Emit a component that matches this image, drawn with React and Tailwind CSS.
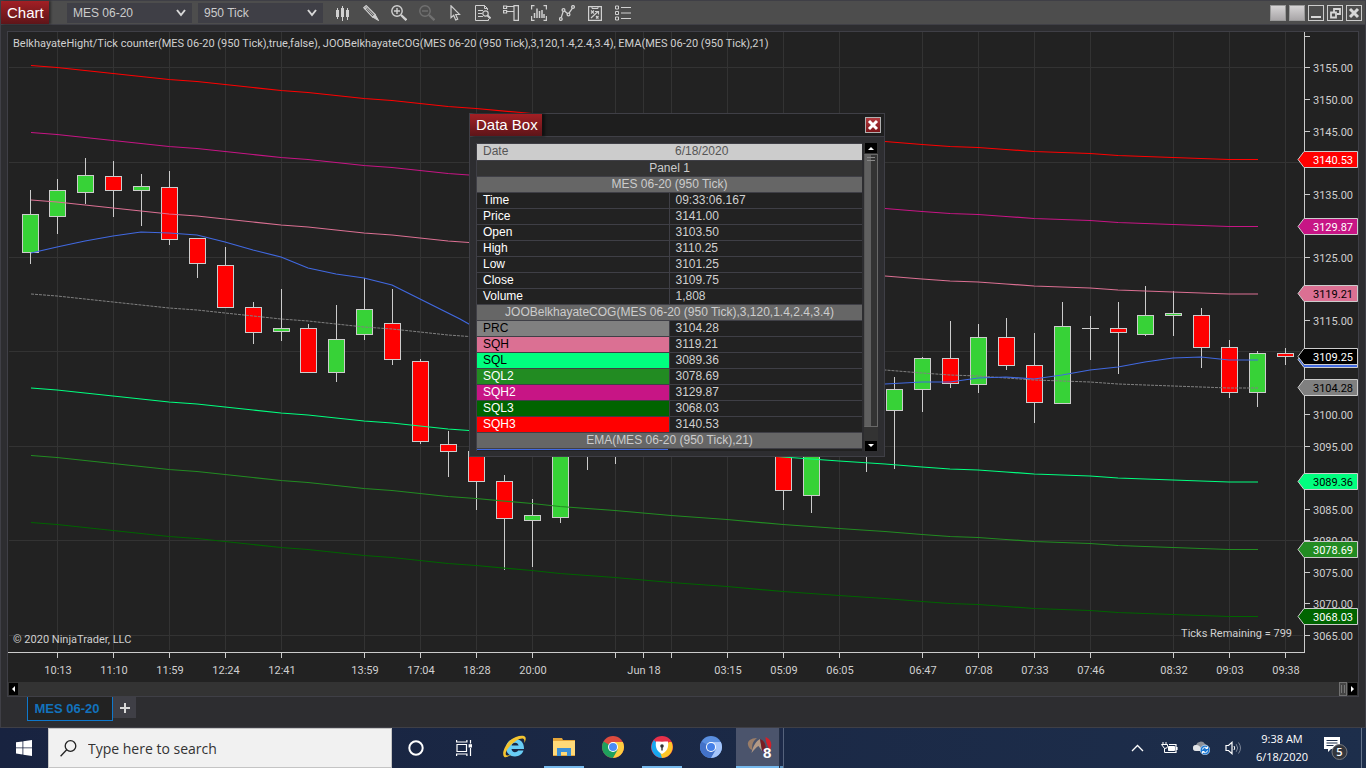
import React from "react";

const GREEN = "#37d237";
const RED = "#ff0000";
const LINE = "#cccccc";

/* center x, body top, body bottom, high, low, colour */
const candles = [
  [30, 214, 252, 190, 264, GREEN],
  [57, 190, 216, 179, 234, GREEN],
  [85, 175, 192, 158, 204, GREEN],
  [113, 176, 190, 161, 217, RED],
  [141, 186, 190, 174, 226, GREEN],
  [169, 187, 239, 171, 245, RED],
  [197, 238, 263, 238, 278, RED],
  [225, 265, 307, 247, 307, RED],
  [253, 307, 332, 302, 344, RED],
  [281, 328, 331, 289, 341, GREEN],
  [308, 328, 372, 324, 372, RED],
  [336, 339, 372, 305, 382, GREEN],
  [364, 309, 334, 278, 340, GREEN],
  [392, 323, 359, 289, 365, RED],
  [420, 361, 441, 359, 444, RED],
  [448, 444, 451, 431, 477, RED],
  [476, 451, 481, 451, 510, RED],
  [504, 481, 518, 475, 570, RED],
  [532, 515, 520, 499, 567, GREEN],
  [560, 440, 517, 430, 523, GREEN],
  [587, 425, 440, 420, 470, RED],
  [615, 425, 440, 420, 464, GREEN],
  [783, 430, 490, 420, 510, RED],
  [811, 430, 495, 420, 513, GREEN],
  [866, 400, 420, 395, 472, GREEN],
  [894, 389, 410, 377, 469, GREEN],
  [922, 358, 389, 357, 412, GREEN],
  [950, 358, 383, 321, 388, RED],
  [978, 337, 384, 324, 393, GREEN],
  [1006, 337, 365, 318, 370, RED],
  [1034, 365, 402, 333, 423, RED],
  [1062, 326, 403, 302, 403, GREEN],
  [1090, 328, 328, 316, 360, GREEN],
  [1118, 328, 332, 302, 374, RED],
  [1145, 315, 334, 286, 336, GREEN],
  [1173, 313, 315, 291, 336, GREEN],
  [1201, 315, 347, 308, 368, RED],
  [1229, 347, 392, 340, 398, RED],
  [1257, 353, 392, 351, 407, GREEN],
  [1285, 353, 356, 348, 365, RED],
];

const regression = [
  [31, 294], [57, 296], [85, 299], [113, 302], [141, 305], [169, 308], [197, 310], [225, 313],
  [253, 316], [281, 319], [308, 321], [336, 324], [364, 327], [392, 329], [420, 332], [448, 335],
  [476, 337], [532, 342], [560, 345], [615, 349], [671, 354], [727, 358], [783, 363], [839, 367],
  [885, 370], [922, 373], [950, 375], [978, 376], [1006, 378], [1034, 380], [1062, 381], [1090, 382],
  [1118, 384], [1145, 385], [1173, 386], [1201, 387], [1229, 388], [1258, 388],
];

const bands = [
  [-228.5, "#ff0000"],
  [-161.5, "#c71585"],
  [-94, "#db7093"],
  [94, "#00ff7f"],
  [161.5, "#228b22"],
  [228.5, "#006400"],
];

const ema = [
  [31, 253], [57, 247], [85, 241], [113, 236], [141, 232], [169, 233], [197, 235], [225, 242],
  [253, 250], [281, 257], [308, 268], [336, 274], [364, 278], [392, 285], [420, 299], [460, 319],
  [476, 328], [560, 365], [671, 392], [783, 402], [839, 390], [885, 384], [922, 382], [950, 382], [978, 378],
  [1006, 377], [1034, 379], [1062, 375], [1090, 370], [1118, 367], [1145, 362], [1173, 358],
  [1201, 357], [1229, 360], [1258, 360],
];

const times = [
  [57, "10:13"], [113, "11:10"], [169, "11:59"], [225, "12:24"], [281, "12:41"], [364, "13:59"],
  [420, "17:04"], [476, "18:28"], [532, "20:00"], [615, ""], [643, "Jun 18"], [671, ""],
  [727, "03:15"], [783, "05:09"], [839, "06:05"], [922, "06:47"], [978, "07:08"], [1034, "07:33"],
  [1090, "07:46"], [1173, "08:32"], [1229, "09:03"], [1285, "09:38"],
];

const gridRows = [67, 162, 257, 351, 446, 540, 635];

const prices = [
  [67, "3155.00"], [99, "3150.00"], [131, "3145.00"], [194, "3135.00"], [257, "3125.00"],
  [320, "3115.00"], [414, "3100.00"], [446, "3095.00"], [509, "3085.00"], [540, "3080.00"],
  [572, "3075.00"], [603, "3070.00"], [635, "3065.00"],
];

const tags = [
  [159, "3140.53", "#ff0000", "#ffffff"],
  [226, "3129.87", "#c71585", "#ffffff"],
  [293, "3119.21", "#db7093", "#000000"],
  [359, "", "#4169e1", "#ffffff"],
  [356, "3109.25", "#000000", "#ffffff"],
  [387, "3104.28", "#808080", "#000000"],
  [481, "3089.36", "#00ff7f", "#000000"],
  [549, "3078.69", "#228b22", "#ffffff"],
  [616, "3068.03", "#006400", "#ffffff"],
];

const toPoints = (pts, dy = 0) => pts.map(([x, y]) => `${x},${y + dy}`).join(" ");

function PriceChart() {
  return (
    <svg
      viewBox="8 32 1350 650"
      className="block h-auto w-full bg-[#222222] font-[Roboto,'Liberation_Sans',sans-serif] text-[11px]"
      role="img"
      aria-label="MES 06-20 950 tick candlestick chart"
    >
      <g stroke="#333333" shapeRendering="crispEdges">
        {times.map(([x]) => (
          <line key={x} x1={x + 0.5} x2={x + 0.5} y1="32" y2="650" />
        ))}
        {gridRows.map((y) => (
          <line key={y} x1="9" x2="1303" y1={y + 0.5} y2={y + 0.5} />
        ))}
      </g>
      <g shapeRendering="crispEdges" stroke={LINE}>
        {candles.map(([x, top, bottom, high, low, fill]) => (
          <g key={x}>
            <line x1={x + 0.5} x2={x + 0.5} y1={high} y2={low} />
            {top === bottom ? (
              <line x1={x - 8} x2={x + 9} y1={top + 0.5} y2={top + 0.5} />
            ) : (
              <rect x={x - 7.5} y={top + 0.5} width="16" height={bottom - top} fill={fill} />
            )}
          </g>
        ))}
      </g>
      <g fill="none">
        {bands.map(([dy, color]) => (
          <polyline key={dy} points={toPoints(regression, dy)} stroke={color} strokeWidth="1.2" />
        ))}
        <polyline points={toPoints(regression)} stroke="#808080" strokeDasharray="3 1" />
        <polyline points={toPoints(ema)} stroke="#4169e1" strokeWidth="1.2" />
      </g>
      <g stroke={LINE} shapeRendering="crispEdges">
        <line x1="8" x2="1305" y1="652.5" y2="652.5" />
        <line x1="1304.5" x2="1304.5" y1="32" y2="653" />
        <line x1="1305" x2="1310" y1="36.5" y2="36.5" />
        {times.map(([x]) => (
          <line key={x} x1={x + 0.5} x2={x + 0.5} y1="653" y2="658" />
        ))}
        {prices.map(([y]) => (
          <line key={y} x1="1305" x2="1310" y1={y + 0.5} y2={y + 0.5} />
        ))}
      </g>
      <g fill="#d0d0d0">
        {times.map(([x, label]) => (
          <text key={x} x={x + 1} y="674" textAnchor="middle">{label}</text>
        ))}
        {prices.map(([y, label]) => (
          <text key={y} x="1313" y={y + 5}>{label}</text>
        ))}
        <text x="13" y="47">
          BelkhayateHight/Tick counter(MES 06-20 (950 Tick),true,false), JOOBelkhayateCOG(MES 06-20 (950 Tick),3,120,1.4,2.4,3.4), EMA(MES 06-20 (950 Tick),21)
        </text>
        <text x="13" y="643">© 2020 NinjaTrader, LLC</text>
        <text x="1292" y="637" textAnchor="end">Ticks Remaining = 799</text>
      </g>
      {tags.map(([y, label, fill, color]) => (
        <g key={y}>
          <polygon
            points={`1298,${y + 0.5} 1304,${y - 7.5} 1357.5,${y - 7.5} 1357.5,${y + 8.5} 1304,${y + 8.5}`}
            fill={fill}
            stroke={LINE}
          />
          <text x="1313" y={y + 5} fill={color}>{label}</text>
        </g>
      ))}
    </svg>
  );
}

const stroke = { fill: "none", stroke: "currentColor" };

const tools = [
  ["Chart style", (
    <g fill="currentColor">
      <path d="M1 5h3v7H1zM2 3h1v11H2zM6 3h3v9H6zM7 1h1v15H7zM11 5h3v7h-3zM12 3h1v12h-1z" />
    </g>
  )],
  ["Drawing tools", (
    <g {...stroke}>
      <path d="M.8 2.7 3.2.6l9 9-2.5 2.5z" strokeWidth="1.2" />
      <path d="M2 1.6 11 10.8M1.8 4.2 4.4 2" />
      <path d="M12.2 9.6 15.6 15.6 9.7 12.1z" fill="currentColor" />
    </g>
  )],
  ["Zoom in", (
    <g {...stroke}>
      <circle cx="6" cy="6" r="5.2" strokeWidth="1.4" />
      <path d="M3 6h6M6 3v6" strokeWidth="1.4" />
      <path d="m10 10 5.4 5.2" strokeWidth="2.4" />
    </g>
  )],
  ["Zoom out", (
    <g fill="none" stroke="#707070">
      <circle cx="6" cy="6" r="5.2" strokeWidth="1.4" />
      <path d="M3 6h6" strokeWidth="1.4" />
      <path d="m10 10 5.4 5.2" strokeWidth="2.4" />
    </g>
  )],
  ["Cursor", (
    <path {...stroke} strokeWidth="1.2" d="M4 .8v11.8l2.7-2.4 2 4.8 2-.9-2-4.6 3.8-.1z" />
  )],
  ["Data box", (
    <g {...stroke}>
      <path d="M12.5 5V3.500L9.500.5H.5v15H13.500V14" />
      <path d="M9.500.5v3h3M3 5.500h5M3 8.500h4M3 11.500h5" />
      <circle cx="10.500" cy="8.500" r="2.700" strokeWidth="1.200" />
      <path d="m12.500 10.500 3 3" strokeWidth="2" />
    </g>
  )],
  ["Chart trader", (
    <g {...stroke}>
      <path d="M11 .6h4.400v14.800H11zM.6 1h3v2.500h-3zM.6 5.500h3V8h-3z" strokeWidth="1.200" />
      <path d="M3.600 1.500H11M3.600 6.500H11" />
    </g>
  )],
  ["Indicators", (
    <g {...stroke}>
      <path d="M3.500.6H.6v4M.6 11v4.400h2.900M12.500.6h2.900v4M15.400 11v4.400h-2.900" strokeWidth="1.200" />
      <path d="M3.500 13V8M6 13V3.500M8.500 13V6M11 13V5M13 13V9" strokeWidth="1.500" />
    </g>
  )],
  ["Strategies", (
    <g {...stroke} strokeWidth="1.300">
      <circle cx="1.800" cy="14" r="1.400" />
      <circle cx="4.500" cy="5" r="1.400" />
      <circle cx="9.500" cy="9.500" r="1.400" />
      <circle cx="14" cy="2" r="1.400" />
      <path d="m2.200 12.600 2-6.200M5.500 6l3 2.500M10 8.200l3.500-5" />
    </g>
  )],
  ["Strategy analyzer", (
    <g {...stroke}>
      <path d="M1.600 1.600h12.800v13.800H1.600z" strokeWidth="1.200" />
      <path d="M5 1.500h6v2H5z" />
      <path d="m4 5.500 3 3m0-3-3 3M4 13l7-6.500M8 6.500h3.500v3M9 11l2.500 2.500m0-2.500L9 13.500" strokeWidth="1.200" />
    </g>
  )],
  ["Properties", (
    <g {...stroke}>
      <path d="M.5 1h3v3h-3zM.5 6.500h3v3h-3zM.5 12h3v3h-3z" />
      <path d="M6 2.500h10M6 8h10M6 13.500h10" strokeWidth="1.200" />
    </g>
  )],
];

function Picker({ label, value }) {
  return (
    <label className="relative block w-[125px]">
      <span className="sr-only">{label}</span>
      <select className="block h-5 w-full appearance-none bg-[#3f3f46] pr-6 pl-1.5 text-xs leading-5 text-[#cccccc] outline-none">
        <option>{value}</option>
      </select>
      <svg viewBox="0 0 10 8" className="pointer-events-none absolute top-1.5 right-1.5 h-2 w-2.5">
        <path d="m1 1 4 5 4-5" fill="none" stroke="#d8d8d8" strokeWidth="2" />
      </svg>
    </label>
  );
}

const boxButton = "flex size-4 items-center justify-center border border-[#cccccc] text-[#d8d8d8]";

function TitleBar() {
  return (
    <header className="flex h-[25px] items-start border-y border-[#3f3f46] bg-[#4d4d4d]">
      <h1 className="h-[23px] w-12 bg-linear-to-b from-[#a31f24] to-[#5e1519] pl-1.5 text-[15px] leading-[23px] text-white shadow-[2px_0_2px_rgba(0,0,0,0.4)]">
        Chart
      </h1>
      <div className="ml-[18px] flex gap-1.5 pt-0.5">
        <Picker label="Instrument" value="MES 06-20" />
        <Picker label="Interval" value="950 Tick" />
      </div>
      <nav className="ml-1.5 flex pt-1 text-[#d0d0d0]" aria-label="Chart tools">
        {tools.map(([name, icon]) => (
          <button key={name} type="button" aria-label={name} className="flex w-7 justify-center">
            <svg viewBox="0 0 16 16" className="size-4">{icon}</svg>
          </button>
        ))}
      </nav>
      <div className="ml-auto flex gap-[3px] pt-1 pr-[3px]">
        <button type="button" aria-label="Instrument link" className="size-4 border border-[#999999] bg-linear-to-b from-[#d5d3d4] to-[#a9a6a8]" />
        <button type="button" aria-label="Interval link" className="size-4 border border-[#999999] bg-linear-to-b from-[#d5d3d4] to-[#a9a6a8]" />
        <button type="button" aria-label="Minimize" className={boxButton}>
          <svg viewBox="0 0 14 14" className="size-3.5 shrink-0"><path d="M2 10h10v2H2z" fill="currentColor" /></svg>
        </button>
        <button type="button" aria-label="Restore" className={boxButton}>
          <svg viewBox="0 0 14 14" className="size-3.5 shrink-0">
            <path d="M6 6V3h6v5H9M3 6.500h5v5H3z" fill="none" stroke="currentColor" strokeWidth="1.800" />
          </svg>
        </button>
        <button type="button" aria-label="Close" className={boxButton}>
          <svg viewBox="0 0 14 14" className="size-3.5 shrink-0">
            <path d="m3 3 8 8m0-8-8 8" stroke="currentColor" strokeWidth="3" />
          </svg>
        </button>
      </div>
    </header>
  );
}

const quoteRows = [
  ["Time", "09:33:06.167"],
  ["Price", "3141.00"],
  ["Open", "3103.50"],
  ["High", "3110.25"],
  ["Low", "3101.25"],
  ["Close", "3109.75"],
  ["Volume", "1,808"],
];

const bandRows = [
  ["PRC", "3104.28", "bg-[#808080] text-black"],
  ["SQH", "3119.21", "bg-[#db7093] text-black"],
  ["SQL", "3089.36", "bg-[#00ff7f] text-black"],
  ["SQL2", "3078.69", "bg-[#228b22] text-white"],
  ["SQH2", "3129.87", "bg-[#c71585] text-white"],
  ["SQL3", "3068.03", "bg-[#006400] text-white"],
  ["SQH3", "3140.53", "bg-[#ff0000] text-white"],
];

function DataRow({ name, value, tone }) {
  return (
    <tr className="h-4 border-b border-[#3f3f46]">
      <th scope="row" className={`border-r border-[#3f3f46] pl-1.5 text-left font-normal ${tone}`}>{name}</th>
      <td className="bg-[#222222] pl-1.5 text-[#d0d0d0]">{value}</td>
    </tr>
  );
}

function SectionRow({ children, tone = "bg-[#666666]" }) {
  return (
    <tr className="h-4 border-b border-[#3f3f46]">
      <th colSpan={2} className={`text-center font-normal text-[#cccccc] ${tone}`}>{children}</th>
    </tr>
  );
}

function DataBox() {
  return (
    <section
      aria-label="Data Box"
      className="absolute top-[81px] left-[461px] w-[416px] border border-[#3f3f46] bg-[#2d2d30]"
    >
      <div className="flex h-[23px] items-start border-b border-[#3f3f46] bg-[#1e1e1e]">
        <h2 className="h-[22px] w-[72px] bg-linear-to-b from-[#a31f24] to-[#5e1519] pl-1.5 text-[15px] leading-[22px] text-white shadow-[3px_0_2px_#111111]">
          Data Box
        </h2>
        <button type="button" aria-label="Close data box" className="mt-[3px] mr-[3px] ml-auto flex size-4 items-center justify-center border border-[#b0b0b0] bg-linear-to-b from-[#b23a3e] to-[#7c1418]">
          <svg viewBox="0 0 12 12" className="size-3"><path d="m2 2 8 8m0-8-8 8" stroke="white" strokeWidth="3" /></svg>
        </button>
      </div>
      <div className="flex gap-0.5 px-1.5 pt-1.5 pb-[5px]">
        <div className="w-[386px] border-t border-l border-[#3f3f46]">
          <table className="w-full table-fixed border-collapse text-xs leading-[15px]">
            <colgroup>
              <col className="w-[192px]" />
              <col />
            </colgroup>
            <tbody>
              <tr className="h-4 border-b border-[#3f3f46] bg-[#cccccc] text-[#555555]">
                <th scope="row" className="pl-1.5 text-left font-normal">Date</th>
                <td className="pl-1.5">6/18/2020</td>
              </tr>
              <SectionRow tone="bg-[#333333]">Panel 1</SectionRow>
              <SectionRow>MES 06-20 (950 Tick)</SectionRow>
              {quoteRows.map(([name, value]) => (
                <DataRow key={name} name={name} value={value} tone="bg-[#222222] text-white" />
              ))}
              <SectionRow>JOOBelkhayateCOG(MES 06-20 (950 Tick),3,120,1.4,2.4,3.4)</SectionRow>
              {bandRows.map(([name, value, tone]) => (
                <DataRow key={name} name={name} value={value} tone={tone} />
              ))}
              <SectionRow>EMA(MES 06-20 (950 Tick),21)</SectionRow>
            </tbody>
          </table>
          <div className="h-0.5 bg-[#222222]">
            <div className="h-px w-[191px] bg-[#4169e1]" />
          </div>
        </div>
        <div className="flex w-3.5 flex-col items-center bg-[#333333]">
          <button type="button" aria-label="Scroll up" className="mb-px flex h-[10px] w-3 items-center justify-center bg-black">
            <svg viewBox="0 0 6 3" className="h-[3px] w-1.5"><path d="m0 3 3-3 3 3z" fill="white" /></svg>
          </button>
          <div className="w-full flex-1 border border-[#686868] border-l-[#555555] bg-linear-to-r from-[#606060] from-50% to-[#333333] to-50% px-0.5 pt-0.5">
            <div className="h-1 border-y border-[#888888]" />
          </div>
          <button type="button" aria-label="Scroll down" className="mt-3.5 flex h-[10px] w-3 items-center justify-center bg-black">
            <svg viewBox="0 0 6 3" className="h-[3px] w-1.5"><path d="m0 0 3 3 3-3z" fill="white" /></svg>
          </button>
        </div>
      </div>
    </section>
  );
}

function ChromeMark({ ring, center }) {
  return (
    <svg viewBox="0 0 22 22" className="size-[22px]">
      <circle cx="11" cy="11" r="11" fill={ring[0]} />
      <path d="M11 11 1.500 5.500A11 11 0 0 0 11 22l5-8z" fill={ring[1]} />
      <path d="M11 6h9.800A11 11 0 0 1 11 22l4.700-8.300z" fill={ring[2]} />
      <circle cx="11" cy="11" r="5" fill="#ffffff" />
      <circle cx="11" cy="11" r="4" fill={center} />
    </svg>
  );
}

const apps = [
  ["Internet Explorer", (
    <svg viewBox="0 0 24 24" className="size-6">
      <path d="M21 14H8.500c.2 2 1.500 3.200 3.500 3.200 1.400 0 2.500-.5 3.100-1.600h5.400C19.300 19.300 16.200 21.500 12 21.500c-5.400 0-9-3.600-9-8.700S6.800 4 12.200 4c5.600 0 9 3.900 8.800 10zM8.600 10.600h7c-.3-1.900-1.600-2.900-3.500-2.900s-3.200 1-3.500 2.900z" fill="#69cdf5" />
      <path d="M7 5.500C12 1 20.500-.8 22.300 2c.9 1.500.2 3.800-1 6 .3-2 .2-3.700-1-4.300C17.500 2.500 11 6.500 7 11c-4 4.300-5.300 8.300-3.500 9.300 1.200.6 3.200-.1 5-1.300-2.700 2.700-6 4-7.400 2.700C-1.500 19 1.500 11 7 5.500z" fill="#f4c430" />
    </svg>
  ), false],
  ["File Explorer", (
    <svg viewBox="0 0 22 20" className="h-5 w-[22px]">
      <path d="M0 1h9l1 2h12v16H0z" fill="#e5a63a" />
      <path d="M0 4h22v14H0z" fill="#ffd978" />
      <path d="M4 11h14v8h-4v-4H8v4H4z" fill="#3c8fd6" />
    </svg>
  ), true],
  ["Chrome", <ChromeMark ring={["#dd4b3e", "#1fa15d", "#ffcd40"]} center="#4c8bf5" />, false],
  ["Secure browser", (
    <svg viewBox="0 0 22 22" className="size-[22px]">
      <circle cx="11" cy="11" r="11" fill="#e8304a" />
      <path d="M3 4a11 11 0 0 0 8 18v-9z" fill="#18a8f0" />
      <path d="M20.500 6A11 11 0 0 1 11 22l-2-6 9-10z" fill="#ffc628" />
      <path d="M5 5.500c4 .2 8 .2 12 0 1 7-1.500 10-6 12.500C6.500 15.500 4 12.500 5 5.500z" fill="#ffffff" />
      <circle cx="11" cy="10" r="1.800" fill="#333333" />
      <path d="M10.300 11h1.400v3.500h-1.400z" fill="#333333" />
    </svg>
  ), true],
  ["Chromium", <ChromeMark ring={["#5a8fe0", "#4372c8", "#a5c5fa"]} center="#4480e8" />, false],
];

function NinjaMark() {
  return (
    <svg viewBox="0 0 26 24" className="h-6 w-[26px]">
      <path d="M10 3C4 3 0 6 1 10c.7 3 2.500 4.500 4.500 5C4.500 10 6 6 10 3z" fill="#9a7d68" />
      <path d="M4.500 18C6 11 9 6 13 4l2 12-3.500-5c-2 1-4.500 4-7 7z" fill="#b49a86" />
      <path d="M13 4c5 2 7 7 5 15l-3-4z" fill="#791c22" />
      <path d="M18.500 2c6 2 7 8 4.500 13-2-3-4.500-8-4.500-13z" fill="#d3202a" />
      <text x="16" y="23" fill="#ffffff" className="font-['Liberation_Sans',Arial,sans-serif] text-[15px] font-bold">8</text>
    </svg>
  );
}

function Taskbar() {
  return (
    <footer className="flex h-10 items-stretch bg-linear-to-r from-[#182340] to-[#1d2e4b] font-['Open_Sans','Noto_Sans',sans-serif] text-white">
      <button type="button" aria-label="Start" className="flex w-12 items-center justify-center">
        <svg viewBox="0 0 16 16" className="size-4" fill="white">
          <path d="M0 2.300 6.500 1.400v6.100H0zM7.300 1.300 16 0v7.500H7.300zM0 8.300h6.500v6.200L0 13.600zM7.300 8.300H16V16l-8.700-1.300z" />
        </svg>
      </button>
      <label className="flex w-[344px] items-center border border-[#c4c4c4] bg-[#f1f1f1]">
        <span className="sr-only">Search</span>
        <svg viewBox="0 0 17 17" className="ml-[11px] size-[17px] shrink-0">
          <circle cx="10.500" cy="6" r="5.300" fill="none" stroke="#222222" strokeWidth="1.300" />
          <path d="M6.700 9.800.6 16.200" stroke="#222222" strokeWidth="1.300" />
        </svg>
        <input
          type="text"
          placeholder="Type here to search"
          className="ml-[11px] h-6 min-w-0 flex-1 bg-transparent text-sm text-[#333333] outline-none placeholder:text-[#333333]"
        />
      </label>
      <button type="button" aria-label="Cortana" className="flex w-12 items-center justify-center">
        <svg viewBox="0 0 16 16" className="size-4"><circle cx="8" cy="8" r="6.700" fill="none" stroke="white" strokeWidth="2" /></svg>
      </button>
      <button type="button" aria-label="Task view" className="flex w-12 items-center justify-center">
        <svg viewBox="0 0 16 16" className="size-4" fill="none" stroke="white" strokeWidth="1.200">
          <path d="M1 4.500h9.500v7H1zM.6 0v2h10.300V0M.6 16v-2h10.300v2M14.500 0v3.500M14.500 8v8" />
          <path d="M13.200 4.800h2.600v2h-2.600z" fill="white" />
        </svg>
      </button>
      <div className="ml-0.5 flex">
        {apps.map(([name, icon, open]) => (
          <button key={name} type="button" aria-label={name} className="flex w-[49px] flex-col items-center">
            <span className="flex h-[38px] items-center">{icon}</span>
            <span className={open ? "h-0.5 w-10 bg-[#76b9ed]" : "h-0.5 w-10"} />
          </button>
        ))}
        <button type="button" aria-label="NinjaTrader 8" className="ml-px flex w-12 border-r border-[#55627c] bg-[#1d2a49]">
          <span className="flex h-full w-11 flex-col items-center border-r border-[#242f45] bg-[#4b546c]">
            <span className="flex h-[38px] items-center pl-1"><NinjaMark /></span>
            <span className="h-0.5 w-full bg-[#76b9ed]" />
          </span>
          <span className="mt-auto h-0.5 flex-1 bg-[#5b92bf]" />
        </button>
      </div>
      <div className="ml-auto flex items-center">
        <button type="button" aria-label="Show hidden icons" className="flex w-8 justify-center">
          <svg viewBox="0 0 13 8" className="h-2 w-[13px]"><path d="m1 7 5.500-5.500L12 7" fill="none" stroke="white" strokeWidth="1.300" /></svg>
        </button>
        <button type="button" aria-label="Battery charging" className="flex w-8 justify-center">
          <svg viewBox="0 0 17 13" className="h-[13px] w-[17px]" fill="none" stroke="white">
            <path d="M2 0v2.500M5 0v2.500M.500 2.500h6v2q0 2-3 2zM3.500 6.500v4h3" />
            <path d="M8 2.500h7v8H5.500M16 5v3" strokeWidth="1.200" />
            <path d="M7.500 4.500h6v4h-6z" fill="white" />
          </svg>
        </button>
        <button type="button" aria-label="OneDrive" className="flex w-8 justify-center">
          <svg viewBox="0 0 17 14" className="h-3.5 w-[17px]">
            <path d="M3 10a3 3 0 0 1 0-6A5 5 0 0 1 12 3a4 4 0 0 1 3 5v2z" fill="#8d9199" />
            <path d="M3 10a3 3 0 0 1 0-6q4-1 6 6z" fill="#e2e4e8" />
            <circle cx="12" cy="9" r="4.800" fill="#1976d2" stroke="#e8f0fa" strokeWidth=".6" />
            <path d="M9.500 8.500a2.700 2.700 0 0 1 4.800-1.200M14.500 9.500a2.700 2.700 0 0 1-4.800 1.200M14.500 5.500v2h-2M9.500 12.500v-2h2" fill="none" stroke="white" />
          </svg>
        </button>
        <button type="button" aria-label="Volume" className="flex w-8 justify-center">
          <svg viewBox="0 0 17 14" className="h-3.5 w-[17px]" fill="none" stroke="white">
            <path d="M1 4.500h2.500L7 1.300v11.400L3.500 9.500H1z" strokeWidth="1.200" />
            <path d="M9 5q1.500 2 0 4" />
            <path d="M11.200 3.200q3 3.800 0 7.600M13.500 1.500q4 5.500 0 11" stroke="#7e8798" />
          </svg>
        </button>
        <button type="button" className="flex w-[66px] flex-col items-center text-[11px] leading-[18px]">
          <span>9:38 AM</span>
          <span>6/18/2020</span>
        </button>
        <button type="button" aria-label="5 notifications" className="ml-0.5 flex w-[38px] justify-center">
          <svg viewBox="0 0 24 26" className="h-[26px] w-6">
            <path d="M0 2h16v12H7l-3 3v-3H0z" fill="white" />
            <path d="M2.500 5.500h11M2.500 8h11M2.500 10.500h7" stroke="#1d2e4b" />
            <circle cx="15.500" cy="17" r="7.500" fill="#33363d" stroke="#77797e" />
            <text x="15.500" y="21" textAnchor="middle" fill="white" className="text-[11px] font-semibold">5</text>
          </svg>
        </button>
        <button type="button" aria-label="Show desktop" className="ml-1.5 h-10 w-[5px] border-l border-[#66758c]" />
      </div>
    </footer>
  );
}

export default function App() {
  return (
    <div className="flex min-h-screen flex-col bg-[#2d2d30] font-['Liberation_Sans',Arial,sans-serif]">
      <main className="flex flex-1 flex-col border-x border-b border-[#3f3f46]">
        <TitleBar />
        <div className="px-1.5 pt-1.5">
          <div className="relative border border-[#3f3f46] bg-[#222222]">
            <PriceChart />
            <div className="flex h-3.5 items-center gap-px bg-[#333333] px-px">
              <button type="button" aria-label="Scroll left" className="flex h-3 w-[9px] items-center justify-center bg-black">
                <svg viewBox="0 0 3 6" className="h-1.5 w-[3px]"><path d="M3 0 0 3l3 3z" fill="white" /></svg>
              </button>
              <div className="ml-auto flex h-3.5 w-2 items-center justify-center border border-[#707070] bg-[#444444]">
                <span className="h-2 w-1 border-x border-[#777777]" />
              </div>
              <button type="button" aria-label="Scroll right" className="flex h-3 w-[9px] items-center justify-center bg-black">
                <svg viewBox="0 0 3 6" className="h-1.5 w-[3px]"><path d="m0 0 3 3-3 3z" fill="white" /></svg>
              </button>
            </div>
            <DataBox />
          </div>
        </div>
        <div className="flex items-start pl-[26px]">
          <button type="button" className="h-6 w-[86px] border border-t-0 border-[#0f78cc] bg-[#222222] pr-1.5 text-[13px] leading-[22px] font-bold text-[#1272bd]">
            MES 06-20
          </button>
          <button type="button" aria-label="Add tab" className="flex h-[21px] w-[23px] items-center justify-center bg-[#3f3f46]">
            <svg viewBox="0 0 10 10" className="size-2.5"><path d="M4 0h2v4h4v2H6v4H4V6H0V4h4z" fill="#d8d8d8" /></svg>
          </button>
        </div>
      </main>
      <Taskbar />
    </div>
  );
}
